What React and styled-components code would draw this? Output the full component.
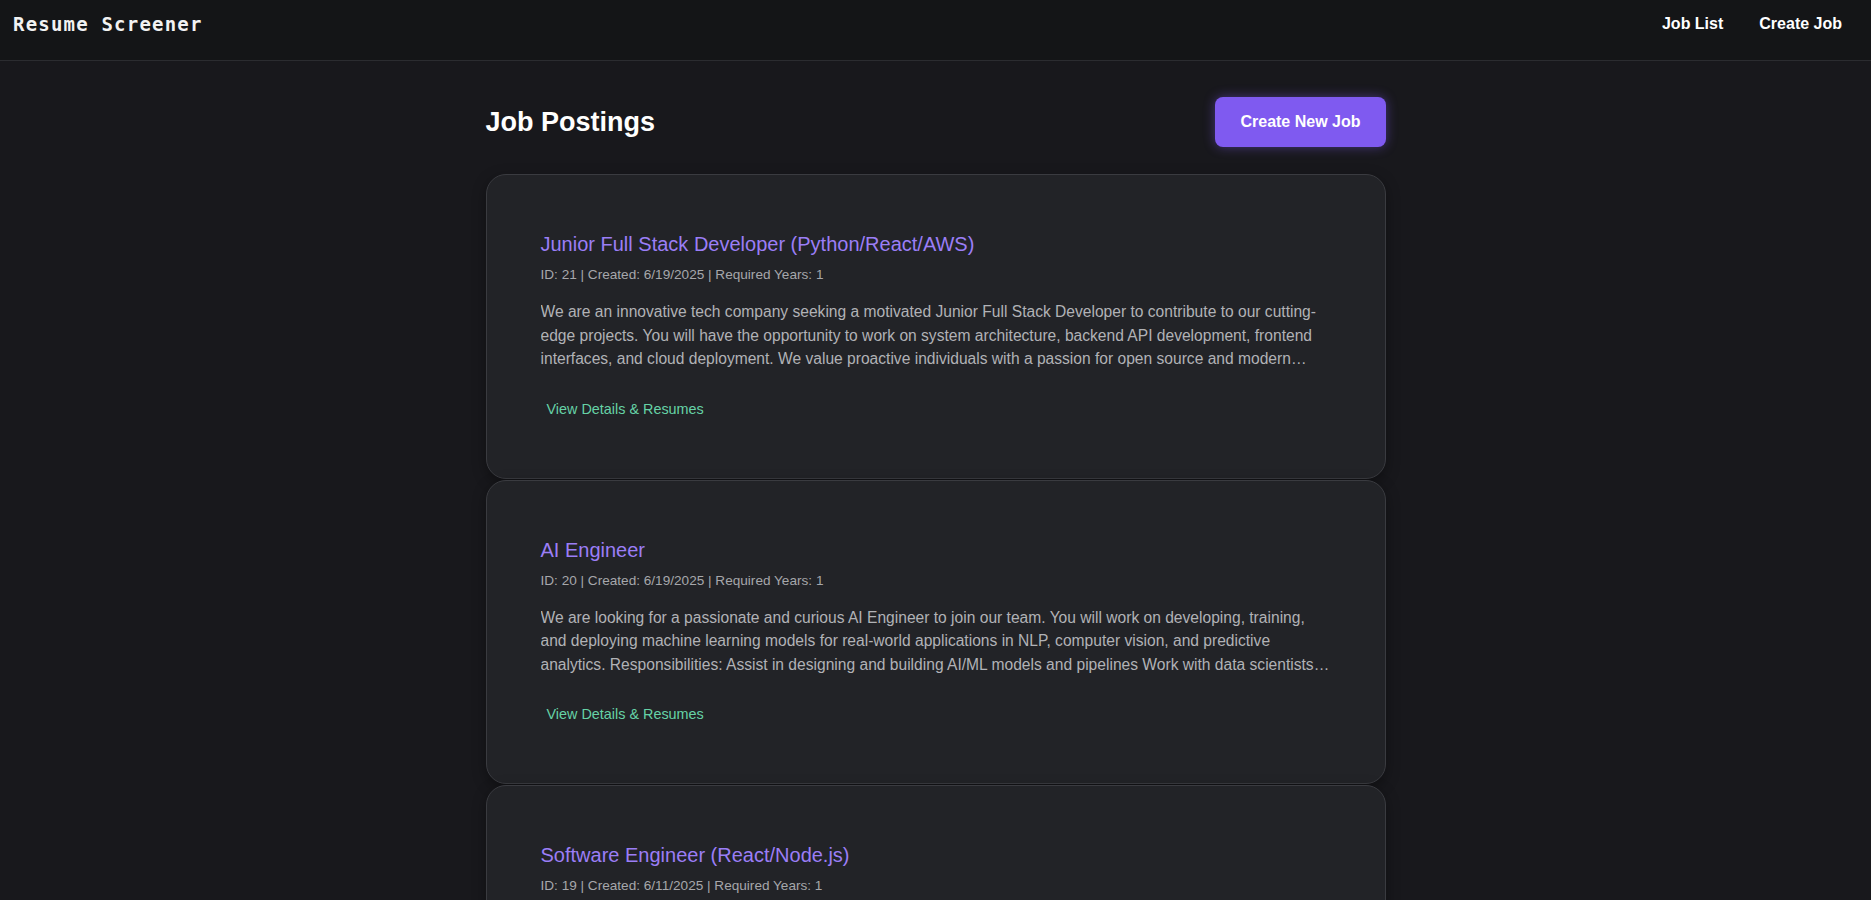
import styled, { createGlobalStyle } from "styled-components";

const GlobalStyle = createGlobalStyle`
  * {
    box-sizing: border-box;
  }

  body {
    margin: 0;
    background-color: #18181c;
    color: #fffffe;
    font-family: "Liberation Sans", Arial, sans-serif;
  }
`;

const Header = styled.header`
  display: flex;
  justify-content: space-between;
  align-items: flex-start;
  height: 61px;
  padding: 12px 29px 0 13px;
  background-color: #141517;
  border-bottom: 1px solid #2b2c30;
`;

const Logo = styled.div`
  font-family: "DejaVu Sans Mono", "Liberation Mono", monospace;
  font-weight: bold;
  font-size: 19px;
  letter-spacing: 1.2px;
  line-height: 24px;
  color: #f2f2f2;
`;

const Nav = styled.nav`
  display: flex;
  gap: 36px;
`;

const NavLink = styled.a`
  font-size: 16px;
  font-weight: bold;
  line-height: 24px;
  color: #ffffff;
  text-decoration: none;
  cursor: pointer;
`;

const Main = styled.main`
  max-width: 900px;
  margin: 0 auto;
  padding-top: 36px;
`;

const TopRow = styled.div`
  display: flex;
  justify-content: space-between;
  align-items: center;
  margin-bottom: 27px;
`;

const PageTitle = styled.h1`
  margin: 0;
  font-size: 27px;
  font-weight: bold;
  color: #fffffe;
`;

const PrimaryButton = styled.button`
  height: 50px;
  padding: 0 25px;
  border: none;
  border-radius: 8px;
  background-color: #7f5af0;
  color: #fffffe;
  font-family: inherit;
  font-size: 16px;
  font-weight: bold;
  box-shadow: 0 0 12px rgba(127, 90, 240, 0.45);
  cursor: pointer;
`;

const List = styled.div`
  display: flex;
  flex-direction: column;
  gap: 1px;
`;

const Card = styled.article`
  padding: 57px 54px 54px;
  background-color: #222327;
  border: 1px solid #3a3b40;
  border-radius: 20px;
  box-shadow: 0 4px 14px rgba(0, 0, 0, 0.35);
`;

const JobTitle = styled.h3`
  margin: 0;
  font-size: 20px;
  font-weight: normal;
  line-height: 24px;
  color: #9b7ef6;
`;

const Meta = styled.div`
  margin-top: 9px;
  font-size: 13.6px;
  line-height: 20px;
  color: #a6a7ab;
`;

const Description = styled.p`
  margin: 15px 0 0;
  font-size: 15.6px;
  line-height: 23.5px;
  color: #b1b2b6;
  display: -webkit-box;
  -webkit-line-clamp: 3;
  -webkit-box-orient: vertical;
  overflow: hidden;
`;

const DetailsButton = styled.button`
  margin-top: 24px;
  padding: 6px 6px;
  border: none;
  background: transparent;
  color: #66d2a6;
  font-family: inherit;
  font-size: 14.4px;
  line-height: 17px;
  cursor: pointer;
`;

const jobs = [
  {
    id: 21,
    title: "Junior Full Stack Developer (Python/React/AWS)",
    created: "6/19/2025",
    years: 1,
    description:
      "We are an innovative tech company seeking a motivated Junior Full Stack Developer to contribute to our cutting-edge projects. You will have the opportunity to work on system architecture, backend API development, frontend interfaces, and cloud deployment. We value proactive individuals with a passion for open source and modern technologies who are eager to learn and grow with our team.",
  },
  {
    id: 20,
    title: "AI Engineer",
    created: "6/19/2025",
    years: 1,
    description:
      "We are looking for a passionate and curious AI Engineer to join our team. You will work on developing, training, and deploying machine learning models for real-world applications in NLP, computer vision, and predictive analytics. Responsibilities: Assist in designing and building AI/ML models and pipelines Work with data scientists and engineers to deliver production-ready solutions.",
  },
  {
    id: 19,
    title: "Software Engineer (React/Node.js)",
    created: "6/11/2025",
    years: 1,
    description:
      "We are seeking a Software Engineer with experience in React and Node.js to build and maintain scalable web applications. You will collaborate with designers and product managers to ship high quality features, write clean and testable code, and participate in code reviews and architecture discussions.",
  },
];

const JobCard = ({ job }) => (
  <Card>
    <JobTitle>{job.title}</JobTitle>
    <Meta>
      ID: {job.id} | Created: {job.created} | Required Years: {job.years}
    </Meta>
    <Description>{job.description}</Description>
    <DetailsButton>View Details &amp; Resumes</DetailsButton>
  </Card>
);

const App = () => {
  return (
    <>
      <GlobalStyle />
      <Header>
        <Logo>Resume Screener</Logo>
        <Nav>
          <NavLink>Job List</NavLink>
          <NavLink>Create Job</NavLink>
        </Nav>
      </Header>
      <Main>
        <TopRow>
          <PageTitle>Job Postings</PageTitle>
          <PrimaryButton>Create New Job</PrimaryButton>
        </TopRow>
        <List>
          {jobs.map((job) => (
            <JobCard key={job.id} job={job} />
          ))}
        </List>
      </Main>
    </>
  );
};

export default App;
